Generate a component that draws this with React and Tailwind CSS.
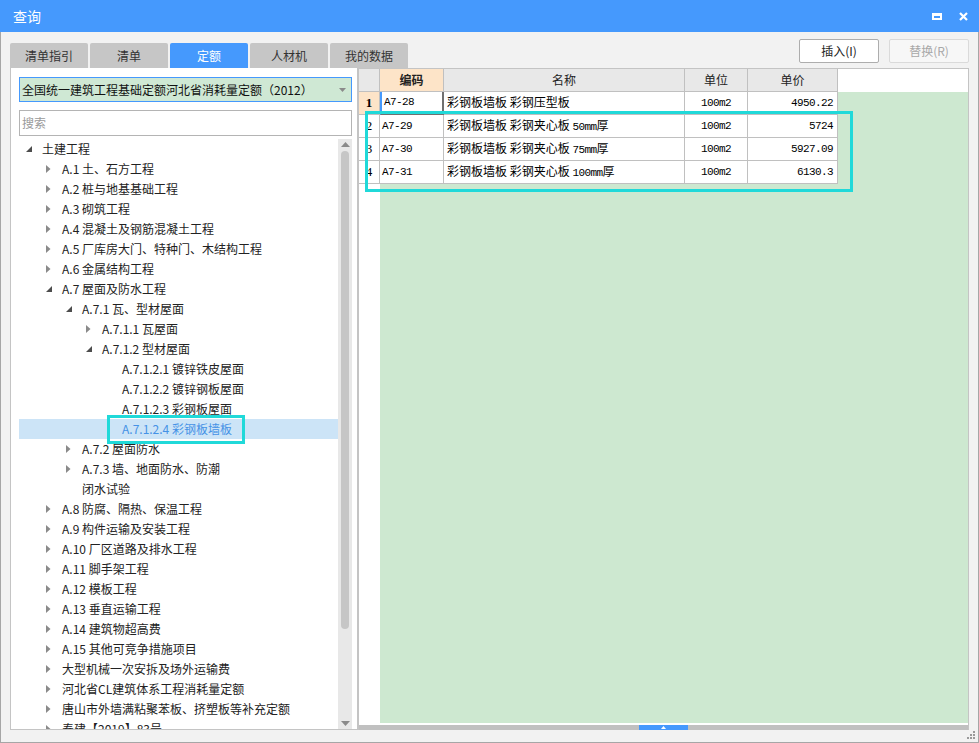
import React from 'react';

const tree = [
  { l: 0, t: '土建工程', s: 'open' },
  { l: 1, t: 'A.1 土、石方工程', s: 'closed' },
  { l: 1, t: 'A.2 桩与地基基础工程', s: 'closed' },
  { l: 1, t: 'A.3 砌筑工程', s: 'closed' },
  { l: 1, t: 'A.4 混凝土及钢筋混凝土工程', s: 'closed' },
  { l: 1, t: 'A.5 厂库房大门、特种门、木结构工程', s: 'closed' },
  { l: 1, t: 'A.6 金属结构工程', s: 'closed' },
  { l: 1, t: 'A.7 屋面及防水工程', s: 'open' },
  { l: 2, t: 'A.7.1 瓦、型材屋面', s: 'open' },
  { l: 3, t: 'A.7.1.1 瓦屋面', s: 'closed' },
  { l: 3, t: 'A.7.1.2 型材屋面', s: 'open' },
  { l: 4, t: 'A.7.1.2.1 镀锌铁皮屋面', s: 'none' },
  { l: 4, t: 'A.7.1.2.2 镀锌钢板屋面', s: 'none' },
  { l: 4, t: 'A.7.1.2.3 彩钢板屋面', s: 'none' },
  { l: 4, t: 'A.7.1.2.4 彩钢板墙板', s: 'none', sel: true },
  { l: 2, t: 'A.7.2 屋面防水', s: 'closed' },
  { l: 2, t: 'A.7.3 墙、地面防水、防潮', s: 'closed' },
  { l: 2, t: '闭水试验', s: 'none' },
  { l: 1, t: 'A.8 防腐、隔热、保温工程', s: 'closed' },
  { l: 1, t: 'A.9 构件运输及安装工程', s: 'closed' },
  { l: 1, t: 'A.10 厂区道路及排水工程', s: 'closed' },
  { l: 1, t: 'A.11 脚手架工程', s: 'closed' },
  { l: 1, t: 'A.12 模板工程', s: 'closed' },
  { l: 1, t: 'A.13 垂直运输工程', s: 'closed' },
  { l: 1, t: 'A.14 建筑物超高费', s: 'closed' },
  { l: 1, t: 'A.15 其他可竞争措施项目', s: 'closed' },
  { l: 1, t: '大型机械一次安拆及场外运输费', s: 'closed' },
  { l: 1, t: '河北省CL建筑体系工程消耗量定额', s: 'closed' },
  { l: 1, t: '唐山市外墙满粘聚苯板、挤塑板等补充定额', s: 'closed' },
  { l: 1, t: '奉建【2019】83号', s: 'closed' },
];

const indent = ['w-0', 'w-[20px]', 'w-[40px]', 'w-[60px]', 'w-[80px]'];

const rows = [
  { n: '1', code: 'A7-28', name: ['彩钢板墙板 彩钢压型板', '', ''], unit: '100m2', price: '4950.22' },
  { n: '2', code: 'A7-29', name: ['彩钢板墙板 彩钢夹心板 ', '50mm', '厚'], unit: '100m2', price: '5724' },
  { n: '3', code: 'A7-30', name: ['彩钢板墙板 彩钢夹心板 ', '75mm', '厚'], unit: '100m2', price: '5927.09' },
  { n: '4', code: 'A7-31', name: ['彩钢板墙板 彩钢夹心板 ', '100mm', '厚'], unit: '100m2', price: '6130.3' },
];

const tabs = ['清单指引', '清单', '定额', '人材机', '我的数据'];

const mono = "font-['Liberation_Mono','Noto_Sans_CJK_SC',monospace] text-[11px] tracking-[-0.6px]";

function Arrow({ s }) {
  if (s === 'open') {
    return (
      <svg width="6" height="6" viewBox="0 0 6 6" className="ml-[2px]">
        <path d="M6 0 L6 6 L0 6 Z" fill="#4d4d4d" />
      </svg>
    );
  }
  if (s === 'closed') {
    return (
      <svg width="5" height="8" viewBox="0 0 5 8" className="ml-[2px]">
        <path d="M0 0 L4.5 4 L0 8 Z" fill="#8a8a8a" />
      </svg>
    );
  }
  return null;
}

export default function App() {
  return (
    <div className="relative w-[979px] h-[743px] overflow-hidden flex flex-col bg-[#f2f2f2] font-['Noto_Sans_CJK_SC','Microsoft_YaHei',sans-serif] text-[12px] text-[#222]">
      {/* 标题栏 */}
      <div className="h-[32px] shrink-0 bg-[#4599fd] flex items-center justify-between pl-[13px] pr-[11px]">
        <span className="text-white text-[14px]">查询</span>
        <div className="flex items-center gap-[17px]">
          <div className="w-[10px] h-[7px] border-white border-t-[3px] border-x-[2px] border-b-[2px]" />
          <svg width="9" height="9" viewBox="0 0 9 9">
            <path d="M1 1 L8 8 M8 1 L1 8" stroke="white" strokeWidth="2.2" />
          </svg>
        </div>
      </div>

      <div className="flex-1 min-h-0 flex flex-col border-x border-b border-[#a6a6a6] pl-[9px] pr-[9px] pb-[12px]">
        {/* 标签 + 按钮 */}
        <div className="h-[36px] shrink-0 flex justify-between">
          <div className="flex gap-[2px] pt-[11px]">
            {tabs.map((t) => (
              <div
                key={t}
                className={`w-[78px] h-[25px] rounded-t-[2px] flex items-center justify-center ${
                  t === '定额' ? 'bg-[#4599fd] text-white' : 'bg-[#c6c6c6] text-[#333]'
                }`}
              >
                {t}
              </div>
            ))}
          </div>
          <div className="flex gap-[10px] pt-[7px]">
            <button className="w-[80px] h-[24px] bg-white border border-[#adadad] rounded-[2px] text-[#222]">插入(I)</button>
            <button className="w-[80px] h-[24px] bg-[#f7f7f7] border border-[#dadada] rounded-[2px] text-[#a8a8a8]">替换(R)</button>
          </div>
        </div>

        <div className="flex-1 flex min-h-0">
          {/* 左侧 */}
          <div className="w-[347px] shrink-0 min-h-0 bg-white border-l border-b border-[#c4c4c4] flex flex-col pl-[8px] pr-[5px] pt-[9px]">
            <div className="h-[25px] shrink-0 bg-[#cfe8d4] border border-[#4599fd] flex items-center justify-between pl-[2px] pr-[5px] text-[#111]">
              <span className="whitespace-nowrap">全国统一建筑工程基础定额河北省消耗量定额（2012）</span>
              <svg width="7" height="4" viewBox="0 0 7 4">
                <path d="M0 0 L7 0 L3.5 4 Z" fill="#8a8a8a" />
              </svg>
            </div>
            <div className="h-[26px] shrink-0 mt-[8px] border border-[#b4b4b4] flex items-center pl-[2px] text-[#9a9a9a]">搜索</div>
            <div className="flex-1 flex mt-[3px] min-h-0 overflow-hidden">
              <div className="flex-1 overflow-hidden">
                {tree.map((n, i) => (
                  <div
                    key={i}
                    className={`h-[20px] flex items-center pl-[5px] ${n.sel ? 'bg-[#cce4f7] text-[#4592e6]' : ''}`}
                  >
                    <div className={`${indent[n.l]} shrink-0`} />
                    <div className="w-[18px] shrink-0 flex items-center">
                      <Arrow s={n.s} />
                    </div>
                    <span className="whitespace-nowrap">{n.t}</span>
                  </div>
                ))}
              </div>
              <div className="w-[14px] shrink-0 bg-[#e8e8e8] flex flex-col items-center">
                <svg width="9" height="5" viewBox="0 0 9 5" className="mt-[3px] shrink-0">
                  <path d="M0 5 L4.5 0 L9 5 Z" fill="#8a8a8a" />
                </svg>
                <div className="w-[8px] h-[478px] shrink-0 mt-[4px] rounded-full bg-[#c6c6c6]" />
                <div className="flex-1" />
                <svg width="9" height="5" viewBox="0 0 9 5" className="mb-[3px] shrink-0">
                  <path d="M0 0 L9 0 L4.5 5 Z" fill="#8a8a8a" />
                </svg>
              </div>
            </div>
          </div>

          {/* 右侧表格 */}
          <div className="flex-1 flex flex-col border-l-2 border-r border-t border-[#c4c4c4] bg-white">
            <div className="h-[23px] shrink-0 flex">
              <div className="w-[21px] border-r border-b border-[#c0c0c0] bg-[#e8e8e8]" />
              <div className="w-[64px] border-r border-b border-[#c0c0c0] bg-[#fde4c8] flex items-center justify-center font-bold">编码</div>
              <div className="w-[241px] border-r border-b border-[#c0c0c0] bg-[#e8e8e8] flex items-center justify-center">名称</div>
              <div className="w-[63px] border-r border-b border-[#c0c0c0] bg-[#e8e8e8] flex items-center justify-center">单位</div>
              <div className="w-[90px] border-r border-b border-[#c0c0c0] bg-[#e8e8e8] flex items-center justify-center">单价</div>
              <div className="flex-1" />
            </div>
            <div className="flex-1 flex min-h-0">
              <div className="w-[21px] shrink-0 bg-white">
                {rows.map((r, i) => (
                  <div
                    key={r.n}
                    className={`h-[23px] border-r border-b border-[#c0c0c0] flex items-center justify-center font-['Liberation_Serif',serif] text-[13px] text-black ${
                      i === 0 ? 'bg-[#fde4c8] font-bold' : ''
                    }`}
                  >
                    {r.n}
                  </div>
                ))}
              </div>
              <div className="flex-1 bg-[#cde8d0] flex flex-col">
                {rows.map((r, i) => (
                  <div key={r.n} className="h-[23px] flex text-black">
                    <div
                      className={`w-[64px] bg-white flex items-center pl-[2px] ${mono} ${
                        i === 0 ? 'border-l-2 border-l-[#4599fd] border-r-2 border-b-2 border-[#707070]' : 'border-r border-b border-[#c0c0c0]'
                      }`}
                    >
                      {r.code}
                    </div>
                    <div className="w-[241px] bg-white border-r border-b border-[#c0c0c0] flex items-center pl-[3px] whitespace-pre">
                      <span>
                        {r.name[0]}
                        <span className={mono}>{r.name[1]}</span>
                        {r.name[2]}
                      </span>
                    </div>
                    <div className={`w-[63px] bg-white border-r border-b border-[#c0c0c0] flex items-center justify-center ${mono}`}>{r.unit}</div>
                    <div className={`w-[90px] bg-white border-r border-b border-[#c0c0c0] flex items-center justify-end pr-[4px] ${mono}`}>{r.price}</div>
                  </div>
                ))}
              </div>
            </div>
            <div className="h-[2px] shrink-0 bg-white" />
            <div className="h-[5px] shrink-0 bg-[#c0c0c0] flex">
              <div className="ml-[280px] w-[49px] bg-[#4599fd] flex items-center justify-center">
                <svg width="5" height="3" viewBox="0 0 5 3">
                  <path d="M0 3 L2.5 0 L5 3 Z" fill="white" />
                </svg>
              </div>
            </div>
          </div>
        </div>
      </div>

      {/* 标注框 */}
      <div className="absolute left-[107px] top-[415px] w-[138px] h-[29px] border-[3px] border-[#20d9d9]" />
      <div className="absolute left-[365px] top-[111px] w-[488px] h-[81px] border-[3px] border-[#20d9d9]" />

      {/* 右下角拖拽 */}
      <svg width="9" height="9" viewBox="0 0 9 9" className="absolute right-[3px] bottom-[3px]">
        <rect x="6" y="0" width="2" height="2" fill="#9a9a9a" />
        <rect x="3" y="3" width="2" height="2" fill="#9a9a9a" />
        <rect x="6" y="3" width="2" height="2" fill="#9a9a9a" />
        <rect x="0" y="6" width="2" height="2" fill="#9a9a9a" />
        <rect x="3" y="6" width="2" height="2" fill="#9a9a9a" />
        <rect x="6" y="6" width="2" height="2" fill="#9a9a9a" />
      </svg>
    </div>
  );
}
